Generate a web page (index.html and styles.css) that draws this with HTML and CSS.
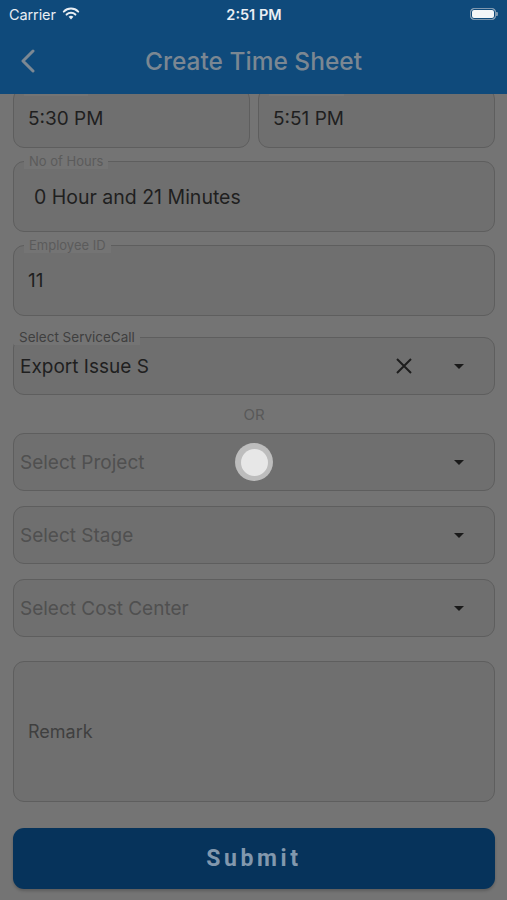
FILE: index.html
```html
<!DOCTYPE html>
<html>
<head>
<meta charset="utf-8">
<link rel="stylesheet" href="styles.css">
</head>
<body>
<div class="app">
  <header class="top">
    <div class="status">
      <div class="status-left">
        <span class="carrier">Carrier</span>
        <svg class="wifi" width="18" height="13" viewBox="0 0 18 13">
          <path d="M9 12.5 L6.6 9.7 A3.6 3.6 0 0 1 11.4 9.7 Z" fill="#e9eef3"/>
          <path d="M4.6 7.6 A6.4 6.4 0 0 1 13.4 7.6" stroke="#e9eef3" stroke-width="2" fill="none" stroke-linecap="round"/>
          <path d="M1.8 4.6 A10.2 10.2 0 0 1 16.2 4.6" stroke="#e9eef3" stroke-width="2" fill="none" stroke-linecap="round"/>
        </svg>
      </div>
      <span class="clock">2:51 PM</span>
      <div class="battery"><div class="battery-fill"></div></div>
    </div>
    <div class="nav">
      <svg class="back" width="16" height="24" viewBox="0 0 16 24">
        <path d="M13 2 L3 12 L13 22" stroke="#7c8893" stroke-width="3" fill="none" stroke-linecap="round" stroke-linejoin="round"/>
      </svg>
      <h1 class="title">Create Time Sheet</h1>
    </div>
  </header>

  <main class="content">
    <div class="row-two">
      <div class="field short">
        <span class="label">Check In</span>
        <span class="value">5:30 PM</span>
      </div>
      <div class="field short">
        <span class="label">Check Out</span>
        <span class="value">5:51 PM</span>
      </div>
    </div>

    <div class="field tall gap-a">
      <span class="label">No of Hours</span>
      <span class="value indent">0 Hour and 21 Minutes</span>
    </div>

    <div class="field tall gap-a">
      <span class="label">Employee ID</span>
      <span class="value indent-s">11</span>
    </div>

    <div class="field select gap-b">
      <span class="label label-left">Select ServiceCall</span>
      <span class="value sel">Export Issue S</span>
      <svg class="clear" width="18" height="18" viewBox="0 0 18 18">
        <path d="M2 2 L16 16 M16 2 L2 16" stroke="#1d1d1d" stroke-width="2" fill="none"/>
      </svg>
      <span class="caret"></span>
    </div>

    <div class="or">OR</div>

    <div class="field select">
      <span class="placeholder">Select Project</span>
      <span class="caret"></span>
    </div>

    <div class="field select gap-c">
      <span class="placeholder">Select Stage</span>
      <span class="caret"></span>
    </div>

    <div class="field select gap-c">
      <span class="placeholder">Select Cost Center</span>
      <span class="caret"></span>
    </div>

    <div class="field remark">
      <span class="placeholder indent-r">Remark</span>
    </div>

    <button class="submit">Submit</button>
  </main>

  <div class="touch"><div class="touch-inner"></div></div>
</div>
</body>
</html>
```

FILE: styles.css
```css
* { box-sizing: border-box; }
html, body { margin: 0; padding: 0; }
body {
  width: 507px;
  height: 900px;
  overflow: hidden;
  background: #747474;
  font-family: Inter, Roboto, "Liberation Sans", sans-serif;
}
.app {
  position: relative;
  width: 507px;
  height: 900px;
  overflow: hidden;
  background: #747474;
}
.top {
  position: relative;
  z-index: 2;
  height: 94px;
  background: #0f4a7b;
  display: flex;
  flex-direction: column;
}
.status {
  height: 28px;
  display: flex;
  align-items: center;
  justify-content: space-between;
  padding: 0 8px 0 9px;
  color: #e9eef3;
  font-family: Inter, Roboto, sans-serif;
  font-size: 14.5px;
}
.status-left { display: flex; align-items: center; gap: 6px; width: 120px; }
.carrier { font-weight: 400; letter-spacing: -0.1px; }
.wifi { margin-top: -1px; }
.clock { font-weight: 600; }
.battery {
  width: 120px;
  display: flex;
  justify-content: flex-end;
  position: relative;
}
.battery-fill {
  width: 26px;
  height: 12px;
  border: 1.5px solid #7f98af;
  border-radius: 4px;
  background: #f4f6f8;
  box-shadow: inset 0 0 0 1px #0f4a7b;
  margin-right: 3px;
}
.battery::after {
  content: "";
  position: absolute;
  right: 1px;
  top: 4px;
  width: 2px;
  height: 4px;
  background: #7f98af;
  border-radius: 0 1px 1px 0;
}
.nav {
  flex: 1;
  display: flex;
  align-items: center;
  position: relative;
  padding-left: 20px;
}
.title {
  position: absolute;
  left: 0; right: 0;
  margin: 0;
  text-align: center;
  font-size: 24.5px;
  font-weight: 500;
  color: #7b8792;
  letter-spacing: 0;
}
.content {
  position: relative;
  z-index: 1;
  margin-top: -6px;
  padding: 0 12px 0 13px;
  display: flex;
  flex-direction: column;
}
.row-two { display: flex; gap: 8px; }
.row-two .field { flex: 1; }
.field {
  position: relative;
  border: 1px solid #5e5e5e;
  border-radius: 11px;
  background: #6f6f6f;
  display: flex;
  align-items: center;
}
.short { height: 60px; }
.tall { height: 71px; }
.select { height: 58px; }
.remark { height: 141px; margin-top: 24px; }
.gap-a { margin-top: 13px; }
.gap-b { margin-top: 21px; }
.gap-c { margin-top: 15px; }
.label {
  position: absolute;
  top: -9px;
  left: 10px;
  padding: 0 5px;
  background: #747474;
  font-size: 13px;
  color: #5b5b5b;
  line-height: 16px;
}
.label-left { left: 0; padding-left: 5px; color: #3f3f3f; font-size: 13.5px; }
.value {
  font-size: 19px;
  color: #1f1f1f;
  padding-left: 14px;
}
.indent { padding-left: 20px; font-size: 19.5px; }
.indent-s { padding-left: 14px; }
.sel { padding-left: 6px; flex: 1; }
.placeholder {
  flex: 1;
  font-size: 19px;
  color: #505050;
  padding-left: 6px;
}
.indent-r { padding-left: 14px; font-size: 18px; color: #3f3f3f; }
.clear { margin-right: 41px; }
.caret {
  width: 0; height: 0;
  border-left: 5px solid transparent;
  border-right: 5px solid transparent;
  border-top: 5px solid #1a1a1a;
  margin-right: 30px;
}
.or {
  text-align: center;
  font-size: 15px;
  color: #595959;
  height: 38px;
  line-height: 40px;
}
.submit {
  margin-top: 26px;
  height: 61px;
  border: none;
  border-radius: 11px;
  background: #06335b;
  color: #8298ad;
  font-family: Roboto, sans-serif;
  font-size: 23px;
  font-weight: 700;
  letter-spacing: 3.6px;
  padding-left: 6px;
  box-shadow: 0 2px 3px rgba(0,0,0,0.2);
}
.touch {
  position: absolute;
  left: 235px;
  top: 443px;
  width: 38px;
  height: 38px;
  border-radius: 50%;
  background: #bdbdbd;
  display: flex;
  align-items: center;
  justify-content: center;
  z-index: 3;
}
.touch-inner {
  width: 27px;
  height: 27px;
  border-radius: 50%;
  background: #e7e7e7;
}
```
